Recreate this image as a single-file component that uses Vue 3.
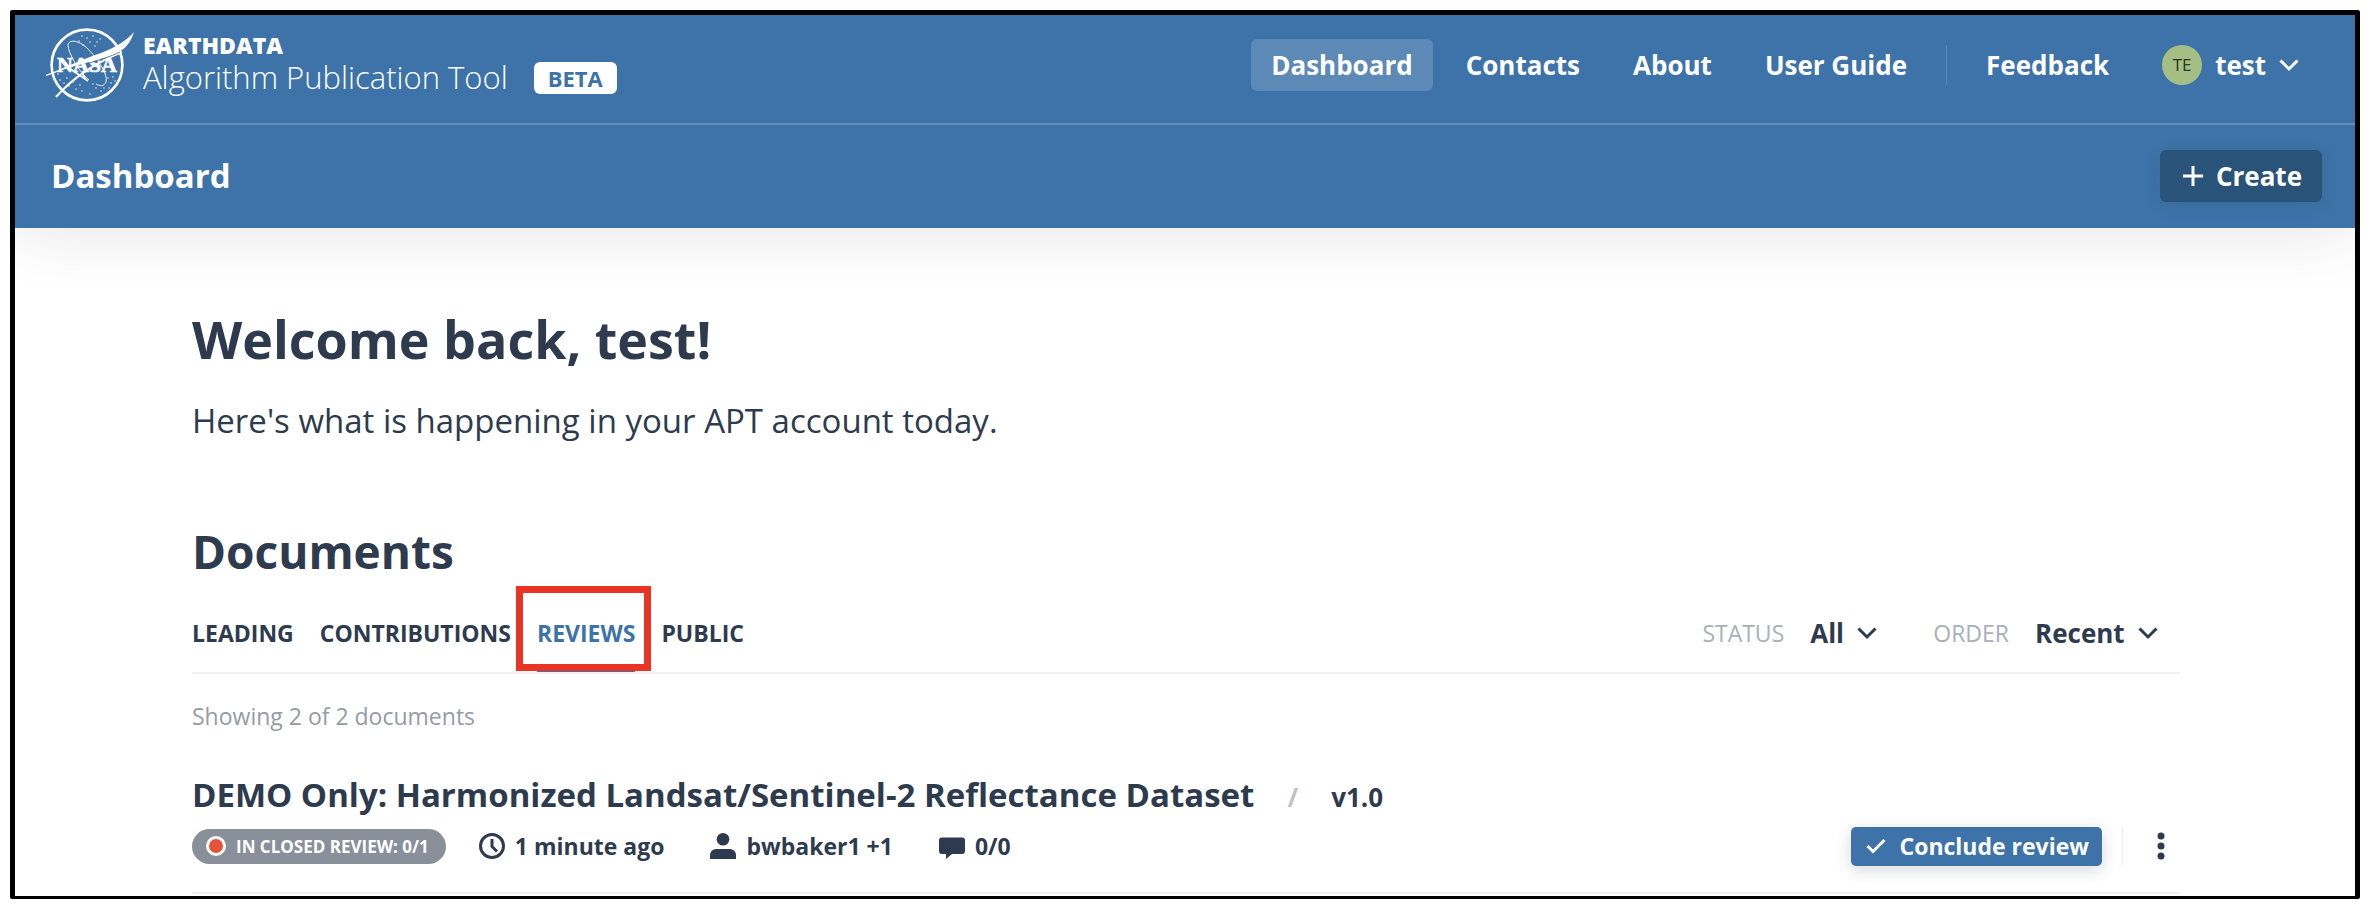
<script setup>
const navItems = ['Dashboard', 'Contacts', 'About', 'User Guide']
const tabs = ['LEADING', 'CONTRIBUTIONS', 'REVIEWS', 'PUBLIC']
const activeTab = 'REVIEWS'
const filters = [
  { id: 'status', label: 'STATUS', value: 'All' },
  { id: 'order', label: 'ORDER', value: 'Recent' },
]
const stars = [
  [36, 8], [41, 10], [47, 8], [44, 14], [51, 14], [37, 17], [33, 13], [54, 11], [49, 18],
  [14, 52], [18, 55], [23, 58], [27, 54], [30, 61], [36, 63], [44, 66], [50, 60], [55, 63],
  [62, 50], [65, 55], [67, 49], [69, 53], [58, 60], [47, 56], [21, 50], [12, 46], [63, 60], [34, 57],
]
</script>

<template>
  <div class="frame">
    <header class="top">
      <div class="masthead">
        <div class="brand">
          <svg class="logo" viewBox="0 0 90 74" aria-hidden="true">
            <circle cx="41" cy="37" r="35.4" fill="none" stroke="#fff" stroke-width="2.6" />
            <circle v-for="(s, i) in stars" :key="i" :cx="s[0]" :cy="s[1]" r="0.7" fill="#fff" />
            <path d="M43 52C33 44 22 25 22 17C23 10 35 13 43 22C54 34 62 47 60 54C58 59 53 58 50 56" fill="none" stroke="#fff" stroke-width="0.9" />
            <text x="41" y="44" text-anchor="middle" class="logo-text">NASA</text>
            <path d="M0 48C18 39 38 31 55 25C70 19 80 13 88 4C84 17 77 24 62 29C45 34 24 38 0 48Z" fill="#fff" />
            <path d="M0 47.500L20 40" fill="none" stroke="#fff" stroke-width="1.200" />
            <path d="M10 69C24 53 44 37 76 24" fill="none" stroke="#fff" stroke-width="1.900" />
            <path d="M23 40L42 53M36 45L40 52" fill="none" stroke="#fff" stroke-width="1.600" />
            <path d="M44 35C55 31 64 29 74 24" fill="none" stroke="#3d73a8" stroke-width="0.8" />
          </svg>
          <div class="names">
            <span class="org">EARTHDATA</span>
            <span class="product">Algorithm Publication Tool</span>
          </div>
          <span class="beta">BETA</span>
        </div>
        <nav class="nav" aria-label="Main">
          <a v-for="item in navItems" :key="item" href="#" class="nav-link" :class="{ current: item === 'Dashboard' }">{{ item }}</a>
          <span class="nav-rule"></span>
          <a href="#" class="nav-link">Feedback</a>
          <button type="button" class="user">
            <span class="avatar">TE</span>
            <span>test</span>
            <svg class="chevron" viewBox="0 0 20 14" aria-hidden="true"><path d="M1.500 2.500l8.500 8.500 8.500-8.500" /></svg>
          </button>
        </nav>
      </div>
      <div class="subhead">
        <h2 class="page-title">Dashboard</h2>
        <button type="button" class="create">
          <svg class="plus" viewBox="0 0 20 20" aria-hidden="true"><path d="M10 0v20M0 10h20" /></svg>
          <span>Create</span>
        </button>
      </div>
    </header>

    <main class="content">
      <h1 class="welcome">Welcome back, test!</h1>
      <p class="lead">Here's what is happening in your APT account today.</p>
      <h2 class="section-title">Documents</h2>

      <div class="toolbar">
        <div class="tabs" role="tablist">
          <button
            v-for="tab in tabs"
            :key="tab"
            type="button"
            role="tab"
            class="tab"
            :class="{ active: tab === activeTab }"
            :aria-selected="tab === activeTab"
          >{{ tab }}</button>
        </div>
        <div class="filters">
          <div v-for="f in filters" :key="f.id" class="filter">
            <label :for="f.id">{{ f.label }}</label>
            <select :id="f.id">
              <option>{{ f.value }}</option>
            </select>
            <svg class="chevron" viewBox="0 0 20 14" aria-hidden="true"><path d="M1.500 2.500l8.500 8.500 8.500-8.500" /></svg>
          </div>
        </div>
      </div>

      <p class="count">Showing 2 of 2 documents</p>

      <article class="doc">
        <div class="doc-head">
          <h3><a href="#">DEMO Only: Harmonized Landsat/Sentinel-2 Reflectance Dataset</a></h3>
          <span class="slash">/</span>
          <span class="version">v1.0</span>
        </div>
        <div class="doc-row">
          <span class="status"><i class="dot"></i>IN CLOSED REVIEW: 0/1</span>
          <span class="meta">
            <svg viewBox="0 0 26 26" aria-hidden="true"><circle cx="13" cy="13" r="11.500" fill="none" stroke="currentColor" stroke-width="3" /><path d="M13 6v7.500l5 5" fill="none" stroke="currentColor" stroke-width="3" /></svg>
            1 minute ago
          </span>
          <span class="meta">
            <svg viewBox="0 0 26 26" aria-hidden="true"><circle cx="13" cy="6.300" r="6.300" fill="currentColor" /><path d="M0 26v-4a6 6 0 0 1 6-6h14a6 6 0 0 1 6 6v4z" fill="currentColor" /></svg>
            bwbaker1 +1
          </span>
          <span class="meta">
            <svg viewBox="0 0 26 26" aria-hidden="true"><path d="M3 4.500h20a3 3 0 0 1 3 3v10.500a3 3 0 0 1-3 3h-10l-6 5v-5h-4a3 3 0 0 1-3-3v-10.500a3 3 0 0 1 3-3z" fill="currentColor" /></svg>
            0/0
          </span>
          <div class="actions">
            <button type="button" class="conclude">
              <svg viewBox="0 0 20 16" aria-hidden="true"><path d="M1.500 8l5.500 5.500L18.500 2" /></svg>
              <span>Conclude review</span>
            </button>
            <span class="action-rule"></span>
            <button type="button" class="more" aria-label="More options">
              <svg viewBox="0 0 8 28" aria-hidden="true"><circle cx="4" cy="4" r="3.500" /><circle cx="4" cy="14" r="3.500" /><circle cx="4" cy="24" r="3.500" /></svg>
            </button>
          </div>
        </div>
      </article>
    </main>
  </div>
</template>

<style>
body {
  margin: 0;
  background: #fff;
}
</style>

<style scoped>
.frame {
  margin: 10px 16px 16px 10px;
  border: 5px solid #000;
  border-bottom-width: 3px;
  border-radius: 2px;
  overflow: hidden;
  background: #fff;
  color: #2e3b4e;
  font-family: "Open Sans", "Noto Sans", sans-serif;
  font-weight: 700;
}
h1, h2, h3, p { margin: 0; }
button, select {
  font: inherit;
  color: inherit;
  border: 0;
  padding: 0;
  background: none;
}
a { color: inherit; text-decoration: none; }
svg { flex: none; display: block; }

.top {
  background: #3d73a8;
  color: #fff;
  box-shadow: 0 0 64px rgba(0, 0, 0, 0.12);
}
.masthead {
  display: flex;
  justify-content: space-between;
  height: 108px;
  padding: 0 36px 0 31px;
  border-bottom: 2px solid #628db8;
}
.brand { display: flex; align-items: flex-start; }
.logo { width: 90px; height: 74px; margin-top: 13px; }
.logo-text {
  font: 700 22px "Liberation Serif", serif;
  fill: #fff;
  stroke: #fff;
  stroke-width: 0.7;
}
.names {
  display: flex;
  flex-direction: column;
  margin: 16px 0 0 7px;
}
.org { font-size: 23px; line-height: 28px; font-weight: 800; }
.product { font-size: 31px; line-height: 36px; font-weight: 300; }
.beta {
  margin: 47px 0 0 26px;
  padding: 0 14px;
  border-radius: 6px;
  background: #fff;
  color: #3d73a8;
  font-size: 22px;
  line-height: 32px;
}
.nav {
  display: flex;
  align-items: center;
  height: 100px;
  gap: 13px;
  font-size: 26px;
}
.nav-link {
  padding: 0 20px;
  border-radius: 6px;
  line-height: 52px;
}
.nav-link.current { background: rgba(255, 255, 255, 0.16); }
.nav-rule {
  width: 1px;
  height: 40px;
  margin: 0 6px;
  background: rgba(255, 255, 255, 0.16);
}
.user {
  display: flex;
  align-items: center;
  gap: 13px;
  padding: 0 20px;
  line-height: 52px;
}
.avatar {
  width: 40px;
  border-radius: 50%;
  background: #a5be84;
  color: #2c3326;
  font-size: 17px;
  line-height: 40px;
  font-weight: 400;
  text-align: center;
}
.chevron { width: 20px; height: 14px; }
.chevron path, .plus path, .conclude path {
  fill: none;
  stroke: currentColor;
  stroke-width: 3;
}
.subhead {
  display: flex;
  align-items: center;
  justify-content: space-between;
  height: 102px;
  padding: 0 33px 1px 36px;
}
.page-title { font-size: 33px; line-height: 40px; }
.create {
  display: flex;
  align-items: center;
  gap: 13px;
  padding: 0 20px 0 23px;
  border-radius: 6px;
  background: #2a5379;
  box-shadow: 0 4px 16px rgba(46, 59, 78, 0.14);
  font-size: 26px;
  line-height: 52px;
}
.plus { width: 20px; height: 20px; }

.content { padding: 79px 175px 2px 177px; }
.welcome { font-size: 52px; line-height: 64px; }
.lead {
  margin-top: 28px;
  font-size: 33px;
  line-height: 44px;
  font-weight: 400;
}
.section-title { margin-top: 78px; font-size: 46px; line-height: 60px; }

.toolbar {
  display: flex;
  justify-content: space-between;
  height: 86px;
  margin-top: 5px;
  border-bottom: 2px solid #f0f0f1;
}
.tabs { display: flex; gap: 26px; font-size: 23px; }
.tab { position: relative; box-sizing: border-box; height: 86px; line-height: 94px; }
.tab.active {
  color: #3d73a8;
  box-shadow: inset 0 -4px 0 #3d73a8;
}
.tab.active::after {
  content: "";
  position: absolute;
  inset: 0 -16px 1px -21px;
  border: 7px solid #e93323;
}
.filters { display: flex; gap: 56px; padding-right: 22px; }
.filter { display: flex; align-items: center; height: 94px; }
.filter label {
  margin-right: 26px;
  color: #abafb7;
  font-size: 23px;
  font-weight: 400;
}
.filter select { appearance: none; font-size: 26px; }
.filter .chevron { margin-left: 13px; pointer-events: none; }

.count {
  margin-top: 24px;
  color: #969ba4;
  font-size: 23px;
  line-height: 36px;
  font-weight: 400;
}
.doc { padding-top: 39px; border-bottom: 2px solid #f0f0f1; }
.doc-head { display: flex; align-items: baseline; gap: 33px; }
.doc-head h3 { font-size: 33px; line-height: 44px; }
.slash { color: #bfc2c8; font-size: 26px; }
.version { font-size: 26px; }
.doc-row {
  display: flex;
  align-items: center;
  height: 40px;
  padding: 9px 0 26px;
}
.status {
  display: flex;
  align-items: center;
  gap: 10px;
  padding: 0 17px 0 14px;
  border-radius: 18px;
  background: #8a909a;
  color: #fff;
  font-size: 17px;
  line-height: 35px;
}
.dot {
  box-sizing: border-box;
  width: 20px;
  height: 20px;
  border: 3px solid #fff;
  border-radius: 50%;
  background: #e5533a;
}
.meta {
  display: flex;
  align-items: center;
  gap: 10px;
  font-size: 23px;
  margin-left: 46px;
}
.status + .meta { margin-left: 33px; }
.meta svg { width: 26px; height: 26px; }
.actions { display: flex; align-items: center; margin-left: auto; }
.conclude {
  display: flex;
  align-items: center;
  gap: 13px;
  padding: 0 13px 0 15px;
  border-radius: 5px;
  background: #3d73a8;
  box-shadow: 0 4px 16px rgba(46, 59, 78, 0.2);
  color: #fff;
  font-size: 23px;
  line-height: 39px;
}
.conclude svg { width: 20px; height: 16px; }
.action-rule { width: 1px; height: 39px; margin-left: 20px; background: #ebecee; }
.more { padding: 0 15px 0 34px; }
.more svg { width: 8px; height: 28px; fill: #2e3b4e; }
</style>
